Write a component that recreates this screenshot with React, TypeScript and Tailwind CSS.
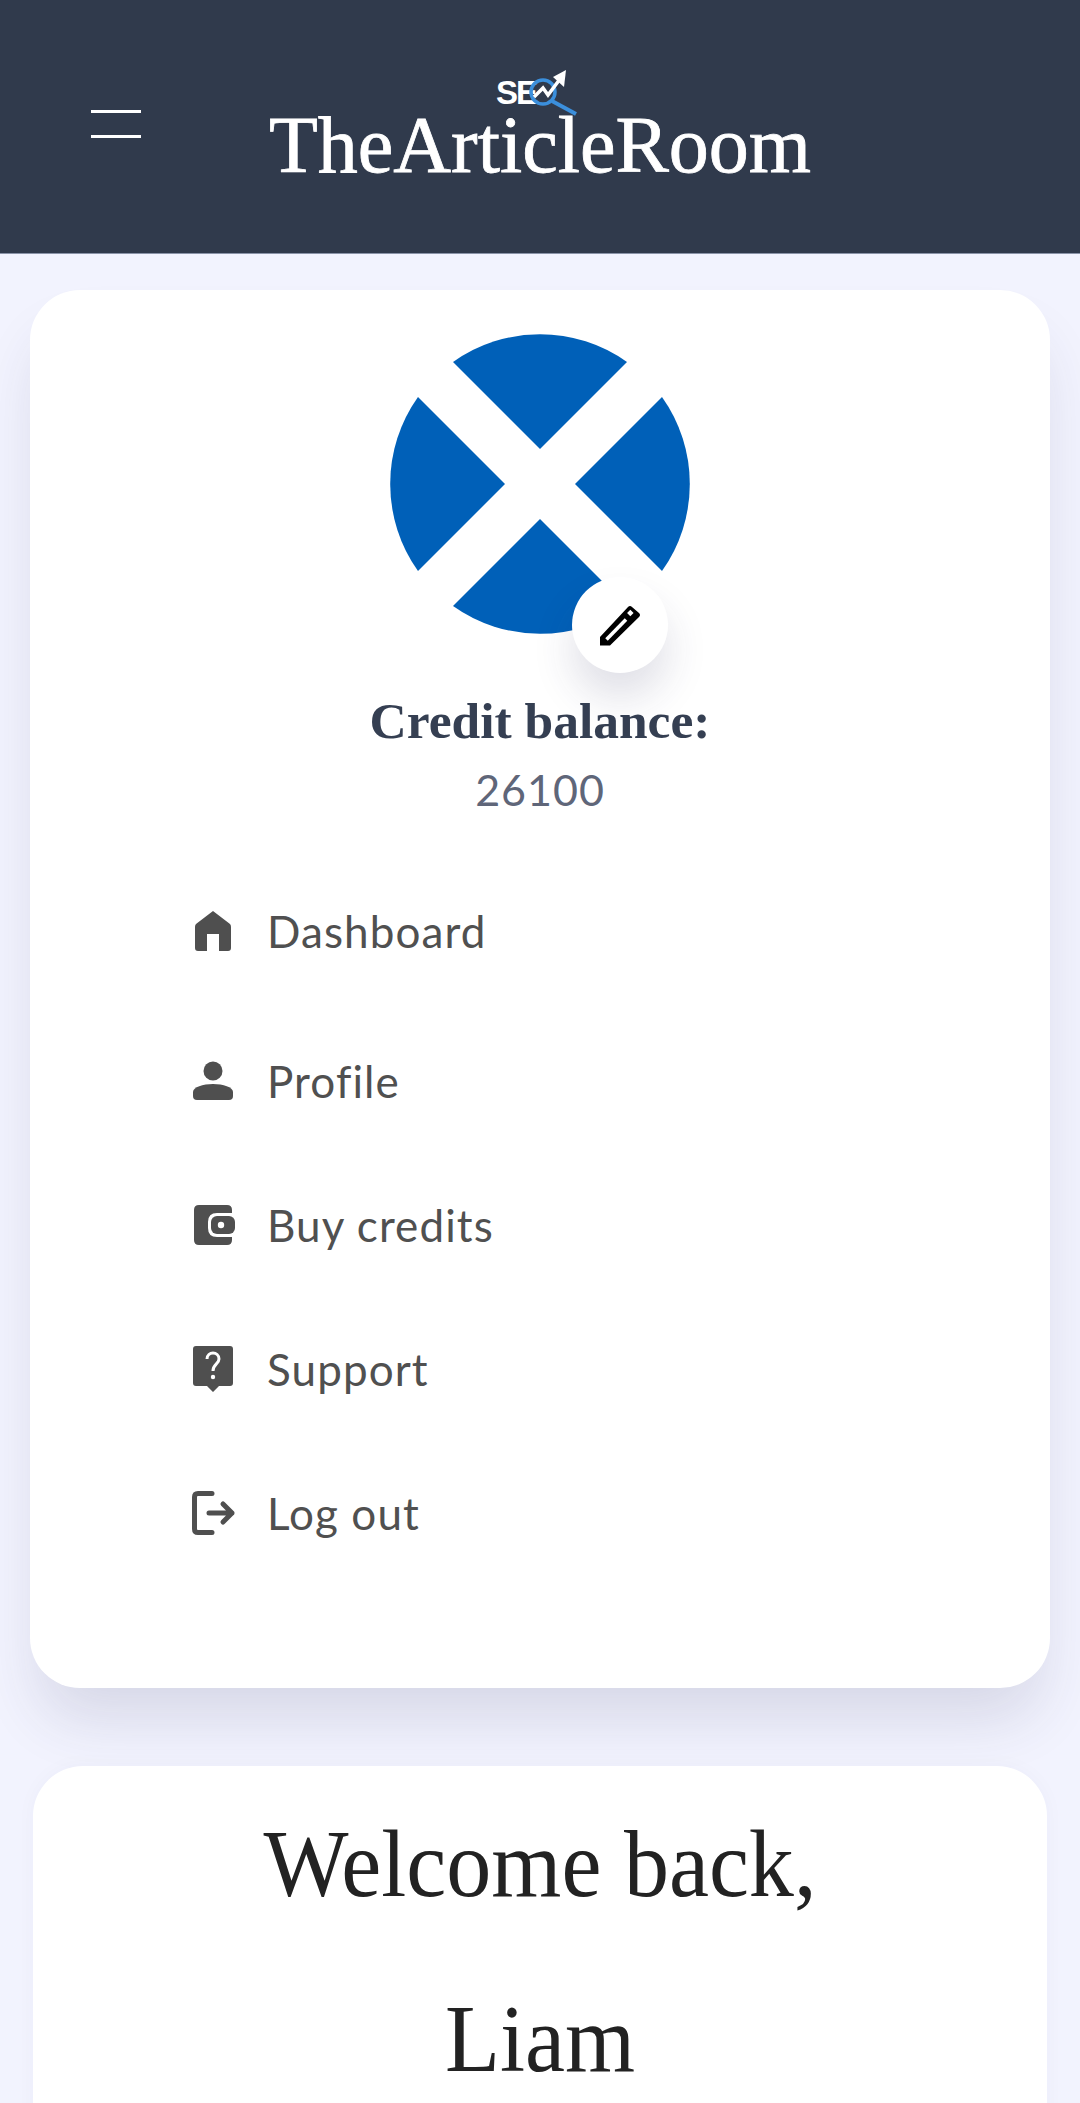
const serif = "font-['Liberation_Serif',serif]";

function Home() {
  return (
    <svg width="40" height="44" viewBox="0 0 40 44" className="block">
      <path d="M20 2 L37 15 Q38 16 38 18 V39 Q38 42 35 42 H26 V25 H14 V42 H5 Q2 42 2 39 V18 Q2 16 3 15 Z" fill="#4f4f4f" />
    </svg>
  );
}

function Person() {
  return (
    <svg width="40" height="40" viewBox="0 0 40 40" className="block">
      <circle cx="20" cy="10" r="9.5" fill="#4f4f4f" />
      <path d="M0 31 C0 26 10 23 20 23 C30 23 40 26 40 31 V35 Q40 39 36 39 H4 Q0 39 0 35 Z" fill="#4f4f4f" />
    </svg>
  );
}

function Wallet() {
  return (
    <svg width="42" height="40" viewBox="0 0 42 40" className="block">
      <path d="M6 0 H34 Q39 0 39 5 V8 H24 Q15 8 15 17 V23 Q15 32 24 32 H39 V35 Q39 40 34 40 H6 Q1 40 1 35 V5 Q1 0 6 0 Z" fill="#4f4f4f" />
      <rect x="18" y="11" width="24" height="18" rx="6" fill="#4f4f4f" />
      <circle cx="28" cy="20" r="3.2" fill="#fff" />
    </svg>
  );
}

function Support() {
  return (
    <svg width="40" height="46" viewBox="0 0 40 46" className="block">
      <path d="M3 0 H37 Q40 0 40 3 V37 Q40 40 37 40 H26 L20 46 L14 40 H3 Q0 40 0 37 V3 Q0 0 3 0 Z" fill="#4f4f4f" />
      <path d="M14 13 C14 5 26 5 26 13 C26 18 20 18 20 25" fill="none" stroke="#fff" strokeWidth="3" />
      <circle cx="20" cy="31" r="2.2" fill="#fff" />
    </svg>
  );
}

function Logout() {
  return (
    <svg width="44" height="44" viewBox="0 0 44 44" className="block -ml-[1px]">
      <path d="M20 2.5 H6 Q2.5 2.5 2.5 6 V38 Q2.5 41.5 6 41.5 H20" fill="none" stroke="#4f4f4f" strokeWidth="5" strokeLinecap="round" />
      <path d="M17 22 H40 M31 13 L40 22 L31 31" fill="none" stroke="#4f4f4f" strokeWidth="5" strokeLinecap="round" strokeLinejoin="round" />
    </svg>
  );
}

function MenuRow({ icon, label, className }: { icon: React.ReactNode; label: string; className?: string }) {
  return (
    <li className={`flex h-[144px] items-center ${className ?? ""}`}>
      <span className="flex w-[74px] shrink-0 items-center">{icon}</span>
      <span className="text-[44px] leading-none text-[#505050] font-['Lato',sans-serif] tracking-[1.1px]">{label}</span>
    </li>
  );
}

function Avatar() {
  return (
    <svg width="300" height="300" viewBox="0 0 300 300" className="block">
      <g fill="#0060b8">
        <path d="M150 115 L63 28 A150 150 0 0 1 237 28 Z" />
        <path d="M150 185 L63 272 A150 150 0 0 0 237 272 Z" />
        <path d="M115 150 L28 63 A150 150 0 0 0 28 237 Z" />
        <path d="M185 150 L272 63 A150 150 0 0 1 272 237 Z" />
      </g>
    </svg>
  );
}

function SeoMark() {
  return (
    <svg width="90" height="46" viewBox="0 0 90 46" className="block">
      <text x="0" y="34" fontSize="33" fontWeight="700" letterSpacing="-2" fill="#fff" fontFamily="'Liberation Sans', sans-serif">SE</text>
      <circle cx="47" cy="22" r="12" fill="none" stroke="#3b8fdc" strokeWidth="3.5" />
      <path d="M56 31 L80 44" stroke="#3b8fdc" strokeWidth="4" />
      <path d="M38 27 L47 18 L52 25 L64 9" fill="none" stroke="#fff" strokeWidth="3.5" />
      <path d="M70 0 L68 17 L57 7 Z" fill="#fff" />
    </svg>
  );
}

export default function App() {
  return (
    <div className="h-[2103px] w-[1080px] overflow-hidden bg-[#f2f3fe]">
      <header className="relative flex h-[254px] items-start justify-center border-b border-[#8a93a8] bg-[#303a4c]">
        <div className="absolute left-[91px] top-[110px] flex w-[50px] flex-col gap-[22px]">
          <span className="h-[3px] bg-white" />
          <span className="h-[3px] bg-white" />
        </div>
        <div className="flex flex-col items-center pt-[70px]">
          <div className="pl-[3px]">
            <SeoMark />
          </div>
          <div className={`-mt-[9px] text-[80px] leading-[76px] text-white [-webkit-text-stroke:0.8px_white] ${serif}`}>TheArticleRoom</div>
        </div>
      </header>

      <section className="mx-[30px] mt-[36px] h-[1398px] rounded-[50px] bg-white pt-[44px] shadow-[0_40px_60px_-10px_rgba(50,50,93,0.14)]">
        <div className="relative mx-auto h-[300px] w-[300px]">
          <Avatar />
          <div className="absolute left-[182px] top-[243px] flex h-[96px] w-[96px] items-center justify-center rounded-full bg-white shadow-[0_25px_40px_rgba(50,50,93,0.15)]">
            <svg width="60" height="60" viewBox="0 0 60 60">
              <path d="M10 42 L38 12 Q40 10 42 12 L49 18 Q51 20 49 22 L20 50.5 H10 Z" fill="#000" />
              <path d="M16.5 44.5 L36 24.5" stroke="#fff" strokeWidth="3.5" />
              <rect x="38" y="15.7" width="4.6" height="4.6" transform="rotate(45 40.3 18)" fill="#fff" />
            </svg>
          </div>
        </div>
        <h2 className={`mt-[57px] text-center text-[51.5px] leading-[60px] font-bold text-[#353f52] ${serif}`}>Credit balance:</h2>
        <p className="mt-[14px] text-center text-[43px] leading-[50px] tracking-[1px] text-[#5f6679] font-['Lato',sans-serif]">26100</p>
        <ul className="mt-[44px] pl-[163px]">
          <MenuRow icon={<Home />} label="Dashboard" />
          <MenuRow icon={<Person />} label="Profile" className="mt-[6px]" />
          <MenuRow icon={<Wallet />} label="Buy credits" />
          <MenuRow icon={<Support />} label="Support" />
          <MenuRow icon={<Logout />} label="Log out" />
        </ul>
      </section>

      <section className="mx-[33px] mt-[78px] h-[600px] rounded-[50px] bg-white pt-[11px] text-center shadow-[0_0_20px_rgba(50,50,93,0.03)]">
        <p className={`scale-x-[0.948] text-[95px] leading-[175px] text-[#222] ${serif}`}>Welcome back,</p>
        <p className={`scale-x-[0.948] text-[95px] leading-[175px] text-[#222] ${serif}`}>Liam</p>
      </section>
    </div>
  );
}
